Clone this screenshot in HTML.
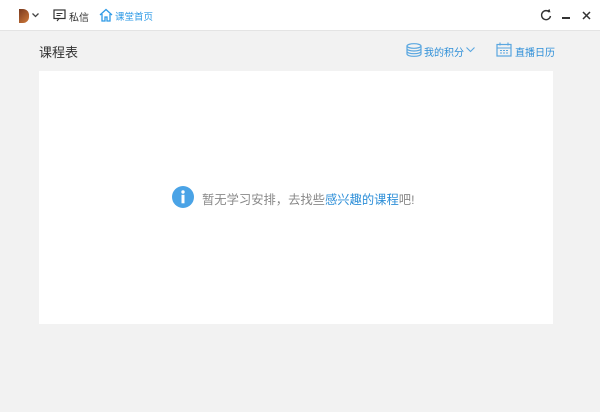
<!DOCTYPE html>
<html><head><meta charset="utf-8"><style>
*{margin:0;padding:0;box-sizing:border-box}
body{width:600px;height:412px;background:#f2f2f2;font-family:"Liberation Sans","Noto Sans CJK SC",sans-serif;position:relative;overflow:hidden}
.top{position:absolute;left:0;top:0;width:600px;height:31px;background:#fff;border-bottom:1px solid #e4e4e4}
.abs{position:absolute;white-space:nowrap}
.card{position:absolute;left:39px;top:71px;width:514px;height:253px;background:#fff}
</style></head><body>
<div class="top">
 <div class="abs" style="left:19px;top:9px;width:10px;height:14px;background:linear-gradient(135deg,#7a3a1e,#d07a3a);border-radius:0 6px 6px 0"></div>
 <svg class="abs" style="left:32px;top:13px" width="7" height="5"><path d="M0.5 0.5L3.5 3.5L6.5 0.5" stroke="#444" fill="none" stroke-width="1.3"/></svg>
 <svg class="abs" style="left:53px;top:9px" width="13" height="13"><rect x="1" y="1" width="11" height="8.5" fill="none" stroke="#333" stroke-width="1.2"/><path d="M4 12L6 9.5M3.5 4.5h6M3.5 6.5h4" stroke="#333" stroke-width="1.1"/></svg>
 <div class="abs" style="left:69px;top:9px;font-size:10px;color:#333">私信</div>
 <svg class="abs" style="left:99px;top:8px" width="14" height="14"><path d="M1 7L7 1.5L13 7M3 6v7h3v-4h2v4h3V6" fill="none" stroke="#2e9ae6" stroke-width="1.3"/></svg>
 <div class="abs" style="left:115px;top:9px;font-size:9.5px;color:#2e9ae6">课堂首页</div>
 <svg class="abs" style="left:540px;top:9px" width="12" height="12"><path d="M9.5 3.2A4.5 4.5 0 1 0 10.5 7" fill="none" stroke="#333" stroke-width="1.4"/><path d="M7.5 1.5L10.5 3.5L9.5 0" fill="#333"/></svg>
 <div class="abs" style="left:562px;top:17px;width:8px;height:2px;background:#333"></div>
 <svg class="abs" style="left:582px;top:11px" width="9" height="9"><path d="M1 1L8 8M8 1L1 8" stroke="#333" stroke-width="1.5"/></svg>
</div>
<div class="abs" style="left:39px;top:42px;font-size:13px;color:#333">课程表</div>
<svg class="abs" style="left:406px;top:43px" width="16" height="14"><ellipse cx="8" cy="3" rx="7" ry="2.3" fill="none" stroke="#5aa7e0" stroke-width="1.2"/><path d="M1 3v8c0 1.3 3 2.3 7 2.3s7-1 7-2.3V3M1 5.7c0 1.3 3 2.3 7 2.3s7-1 7-2.3M1 8.4c0 1.3 3 2.3 7 2.3s7-1 7-2.3" fill="none" stroke="#5aa7e0" stroke-width="1.2"/></svg>
<div class="abs" style="left:424px;top:44px;font-size:10px;color:#2e8fd8">我的积分</div>
<svg class="abs" style="left:466px;top:47px" width="9" height="6"><path d="M0.5 0.5L4.5 4.5L8.5 0.5" stroke="#5aa7e0" fill="none" stroke-width="1.1"/></svg>
<svg class="abs" style="left:496px;top:42px" width="16" height="15"><rect x="1" y="2.5" width="14" height="11.5" fill="none" stroke="#5aa7e0" stroke-width="1.2"/><path d="M4 0.5v3M12 0.5v3M1 6h14M4 8.5h2M7 8.5h2M10 8.5h2M4 11h2M7 11h2M10 11h2" stroke="#5aa7e0" stroke-width="1.1"/></svg>
<div class="abs" style="left:515px;top:44px;font-size:10px;color:#2e8fd8">直播日历</div>
<div class="card"></div>
<svg class="abs" style="left:172px;top:186px" width="22" height="22"><circle cx="11" cy="11" r="11" fill="#4aa3e6"/><circle cx="11" cy="6" r="1.7" fill="#fff"/><rect x="9.5" y="8.8" width="3" height="8.5" fill="#fff"/></svg>
<div class="abs" style="left:202px;top:190px;font-size:12.3px;color:#888">暂无学习安排，去找些<span style="color:#2e8fd8">感兴趣的课程</span>吧!</div>
</body></html>
